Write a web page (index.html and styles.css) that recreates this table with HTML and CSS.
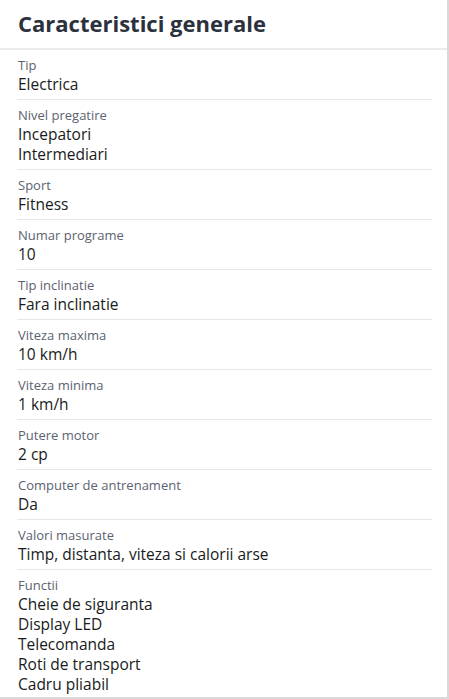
FILE: index.html
```html
<!DOCTYPE html>
<html lang="ro">
<head>
  <meta charset="UTF-8">
  <title>Caracteristici generale</title>
  <link rel="stylesheet" href="styles.css">
</head>
<body>

  <div class="specs">
    <h2 class="specs-title">Caracteristici generale</h2>

    <div class="spec-row">
      <div class="spec-label">Tip</div>
      <div class="spec-value">Electrica</div>
    </div>
    <div class="spec-row">
      <div class="spec-label">Nivel pregatire</div>
      <div class="spec-value">Incepatori</div>
      <div class="spec-value">Intermediari</div>
    </div>
    <div class="spec-row">
      <div class="spec-label">Sport</div>
      <div class="spec-value">Fitness</div>
    </div>
    <div class="spec-row">
      <div class="spec-label">Numar programe</div>
      <div class="spec-value">10</div>
    </div>
    <div class="spec-row">
      <div class="spec-label">Tip inclinatie</div>
      <div class="spec-value">Fara inclinatie</div>
    </div>
    <div class="spec-row">
      <div class="spec-label">Viteza maxima</div>
      <div class="spec-value">10 km/h</div>
    </div>
    <div class="spec-row">
      <div class="spec-label">Viteza minima</div>
      <div class="spec-value">1 km/h</div>
    </div>
    <div class="spec-row">
      <div class="spec-label">Putere motor</div>
      <div class="spec-value">2 cp</div>
    </div>
    <div class="spec-row">
      <div class="spec-label">Computer de antrenament</div>
      <div class="spec-value">Da</div>
    </div>
    <div class="spec-row">
      <div class="spec-label">Valori masurate</div>
      <div class="spec-value">Timp, distanta, viteza si calorii arse</div>
    </div>
    <div class="spec-row last">
      <div class="spec-label">Functii</div>
      <div class="spec-value">Cheie de siguranta</div>
      <div class="spec-value">Display LED</div>
      <div class="spec-value">Telecomanda</div>
      <div class="spec-value">Roti de transport</div>
      <div class="spec-value">Cadru pliabil</div>
    </div>
  </div>

</body>
</html>
```

FILE: styles.css
```css
body {
  font-family: "Open Sans", sans-serif;
  background-color: #fff;
  margin: 0;
  padding: 0;
}

.specs {
  width: 449px;
  height: 699px;
  border-right: 2px solid #d9d9d9;
  border-bottom: 2px solid #d9d9d9;
  box-sizing: border-box;
  overflow: hidden;
}

.specs-title {
  font-size: 22px;
  font-weight: 700;
  color: #2b323d;
  margin: 0;
  padding: 0 18px;
  height: 48px;
  line-height: 46px;
  border-bottom: 2px solid #ebebeb;
}

.spec-row {
  margin: 0 15px 0 17px;
  padding: 6px 1px 5px;
  border-bottom: 1px solid #e6e6e6;
}

.spec-row.last {
  border-bottom: none;
}

.spec-label {
  font-size: 13px;
  line-height: 18px;
  color: #5b6370;
}

.spec-value {
  font-size: 15.5px;
  line-height: 20px;
  color: #181b20;
}
```
